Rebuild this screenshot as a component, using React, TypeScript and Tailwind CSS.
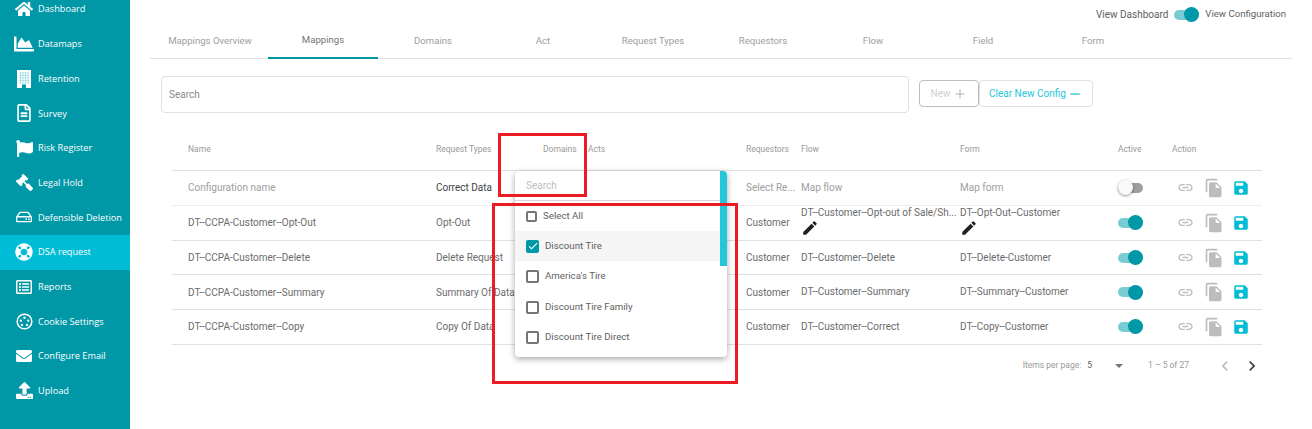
import React from 'react';
import {
  FaHome,
  FaChartArea,
  FaRegFileAlt,
  FaFlag,
  FaGavel,
  FaRegHdd,
  FaLifeRing,
  FaRegListAlt,
  FaEnvelope,
  FaUpload,
} from 'react-icons/fa';
import {
  MdEdit,
  MdLink,
  MdFileCopy,
  MdSave,
  MdChevronLeft,
  MdChevronRight,
  MdCheck,
  MdRemove,
} from 'react-icons/md';
import { Plus } from 'lucide-react';

const CookieIcon = ({ className }: { className?: string }) => (
  <svg viewBox="0 0 20 20" className={className} fill="none">
    <circle cx="10" cy="10" r="8.6" stroke="currentColor" strokeWidth="1.8" />
    <circle cx="10" cy="5.6" r="1.4" fill="currentColor" />
    <circle cx="5.6" cy="9" r="1.4" fill="currentColor" />
    <circle cx="14.4" cy="9" r="1.4" fill="currentColor" />
    <circle cx="7" cy="14" r="1.4" fill="currentColor" />
    <circle cx="13" cy="14" r="1.4" fill="currentColor" />
  </svg>
);

// white block with a faint window grid and a door
const RetentionIcon = ({ className }: { className?: string }) => (
  <svg viewBox="0 0 14 18" className={className}>
    <rect x="0" y="0" width="14" height="18" fill="#fff" />
    <g stroke="#8fd3da" strokeWidth="0.6">
      <path d="M2 3h10M2 5.5h10M2 8h10M2 10.5h10M2 13h10" />
      <path d="M3.5 2v11M6 2v11M8.5 2v11M11 2v11" />
    </g>
    <rect x="5" y="14.5" width="4" height="3.5" fill="#0097a7" />
  </svg>
);

const navItems = [
  { label: 'Dashboard', icon: <FaHome className="w-[18px] h-[18px]" /> },
  { label: 'Datamaps', icon: <FaChartArea className="w-[20px] h-[20px]" /> },
  { label: 'Retention', icon: <RetentionIcon className="w-[14px] h-[18px]" /> },
  { label: 'Survey', icon: <FaRegFileAlt className="w-[16px] h-[18px]" /> },
  { label: 'Risk Register', icon: <FaFlag className="w-[17px] h-[17px]" /> },
  { label: 'Legal Hold', icon: <FaGavel className="w-[17px] h-[17px] -scale-x-100" /> },
  { label: 'Defensible Deletion', icon: <FaRegHdd className="w-[16px] h-[16px]" /> },
  { label: 'DSA request', icon: <FaLifeRing className="w-[18px] h-[18px]" />, active: true },
  { label: 'Reports', icon: <FaRegListAlt className="w-[18px] h-[16px]" /> },
  { label: 'Cookie Settings', icon: <CookieIcon className="w-[17px] h-[17px]" /> },
  { label: 'Configure Email', icon: <FaEnvelope className="w-[18px] h-[16px]" /> },
  { label: 'Upload', icon: <FaUpload className="w-[17px] h-[17px]" /> },
];

const tabs = ['Mappings Overview', 'Mappings', 'Domains', 'Act', 'Request Types', 'Requestors', 'Flow', 'Field', 'Form'];

const tableCols = 'grid grid-cols-[264px_107px_45px_158px_55px_159px_158px_54px_90px]';

const rows = [
  { name: 'DT--CCPA-Customer--Opt-Out', type: 'Opt-Out', flow: 'DT--Customer--Opt-out of Sale/Sh...', form: 'DT--Opt-Out--Customer', edit: true },
  { name: 'DT--CCPA-Customer--Delete', type: 'Delete Request', flow: 'DT--Customer--Delete', form: 'DT--Delete-Customer' },
  { name: 'DT--CCPA-Customer--Summary', type: 'Summary Of Data', flow: 'DT--Customer--Summary', form: 'DT--Summary--Customer' },
  { name: 'DT--CCPA-Customer--Copy', type: 'Copy Of Data', flow: 'DT--Customer--Correct', form: 'DT--Copy--Customer' },
];

const domainOptions = ['Discount Tire', "America's Tire", 'Discount Tire Family', 'Discount Tire Direct'];

const Toggle = ({ on }: { on: boolean }) => (
  <div className="relative w-[25px] h-[15px] flex items-center">
    <div className={`w-full h-[10px] rounded-full ${on ? 'bg-[#7accd4]' : 'bg-[#9e9e9e]'}`}></div>
    <div
      className={`absolute top-0 w-[15px] h-[15px] rounded-full ${
        on ? 'right-0 bg-[#0097a7]' : 'left-0 bg-[#fafafa] shadow-[0_1px_3px_rgba(0,0,0,0.4)]'
      }`}
    ></div>
  </div>
);

const Actions = () => (
  <div className="flex items-center">
    <MdLink className="w-[17px] h-[17px] text-[#bdbdbd] ml-[5px]" />
    <MdFileCopy className="w-[20px] h-[20px] text-[#bdbdbd] ml-[10px]" />
    <MdSave className="w-[18px] h-[18px] text-[#00bcd4] ml-[8px]" />
  </div>
);

const App = () => {
  return (
    <div className="relative flex w-[1312px] h-[429px] overflow-hidden bg-white font-['Roboto',sans-serif] text-[10px] text-[#6b6b6b]">
      {/* Sidebar */}
      <aside className="w-[130px] shrink-0 bg-[#0097a7] text-white font-['Open_Sans',sans-serif]">
        <div className="-mt-[8px]">
          {navItems.map((item) => (
            <div
              key={item.label}
              className={`flex items-center h-[34.7px] pl-[12px] ${item.active ? 'bg-[#00bcd4]' : ''}`}
            >
              <span className="w-[26px] flex justify-center -ml-[1px] mr-[1px]">{item.icon}</span>
              <span className="text-[9.2px] whitespace-nowrap">{item.label}</span>
            </div>
          ))}
        </div>
      </aside>

      {/* Main */}
      <main className="flex-1 min-w-0">
        <div className="flex justify-end items-center h-[15px] mt-[7px] pr-[26px] text-[10px] text-[#616161]">
          <span>View Dashboard</span>
          <div className="ml-[6px] mr-[6px]">
            <Toggle on />
          </div>
          <span className="text-[9.6px]">View Configuration</span>
        </div>

        <div className="flex ml-[20px] mr-[20px] mt-[8px] h-[29px] pl-[8px] border-b border-[#e0e0e0]">
          {tabs.map((tab) => (
            <div
              key={tab}
              className={`w-[110px] flex items-center justify-center pb-[6px] text-[9.6px] text-[#9e9e9e] ${
                tab === 'Mappings' ? 'border-b-2 border-[#0097a7] h-[29px] text-[#757575]' : ''
              } ${tab === 'Mappings Overview' ? 'pr-[6px]' : ''}`}
            >
              {tab}
            </div>
          ))}
        </div>

        <div className="flex items-center mt-[17px] ml-[31px]">
          <div className="w-[748px] h-[37px] flex items-center px-[7px] border border-[#e0e0e0] rounded text-[#8a8a8a]">
            Search
          </div>
          <div className="w-[60px] h-[27px] ml-[10px] mb-[2px] flex items-center justify-center gap-[3px] border border-[#bdbdbd] rounded text-[#d0d0d0]">
            New
            <Plus className="w-[14px] h-[14px] text-[#9e9e9e]" strokeWidth={1.3} />
          </div>
          <div className="w-[114px] h-[27px] mb-[2px] flex items-center justify-center border border-[#e0e0e0] rounded text-[#26c6da]">
            Clear New Config
            <MdRemove className="w-[16px] h-[16px] ml-[1px]" />
          </div>
        </div>

        {/* Table */}
        <div className="ml-[42px] w-[1090px] mt-[14px]">
          <div className={`${tableCols} h-[44px] items-center pt-[2px] text-[8.5px] text-[#9a9a9a] border-b border-[#e0e0e0]`}>
            <div className="pl-[16px]">Name</div>
            <div>Request Types</div>
            <div>Domains</div>
            <div>Acts</div>
            <div>Requestors</div>
            <div>Flow</div>
            <div>Form</div>
            <div>Active</div>
            <div>Action</div>
          </div>

          <div className={`${tableCols} h-[35px] items-center pb-[1px] text-[#9e9e9e] border-b border-[#eeeeee]`}>
            <div className="pl-[16px]">Configuration name</div>
            <div className="text-[#424242]">Correct Data</div>
            <div></div>
            <div></div>
            <div className="whitespace-nowrap">Select Re...</div>
            <div>Map flow</div>
            <div>Map form</div>
            <Toggle on={false} />
            <Actions />
          </div>

          {rows.map((row) => (
            <div key={row.name} className={`${tableCols} h-[34.7px] items-center border-b border-[#e0e0e0]`}>
              <div className="pl-[16px]">{row.name}</div>
              <div className="whitespace-nowrap">{row.type}</div>
              <div></div>
              <div></div>
              <div>Customer</div>
              <div className={`whitespace-nowrap leading-[12px] ${row.edit ? 'mb-[2px]' : ''}`}>
                {row.flow}
                {row.edit && <MdEdit className="w-[18px] h-[18px] text-[#212121] block" />}
              </div>
              <div className={`whitespace-nowrap leading-[12px] ${row.edit ? 'mb-[2px]' : ''}`}>
                {row.form}
                {row.edit && <MdEdit className="w-[18px] h-[18px] text-[#212121] block" />}
              </div>
              <Toggle on />
              <Actions />
            </div>
          ))}

          <div className="flex justify-end items-center h-[42px] text-[8.5px] text-[#9a9a9a]">
            <span>Items per page:</span>
            <span className="ml-[6px] text-[#616161]">5</span>
            <div className="ml-[23px] w-0 h-0 border-x-[4px] border-x-transparent border-t-[4px] border-t-[#757575]"></div>
            <span className="ml-[25px]">1 – 5 of 27</span>
            <MdChevronLeft className="ml-[26px] w-[20px] h-[20px] text-[#bdbdbd]" />
            <MdChevronRight className="ml-[7px] w-[20px] h-[20px] text-[#424242]" />
          </div>
        </div>
      </main>

      {/* Domains dropdown */}
      <div className="absolute left-[515px] top-[171px] w-[212px] h-[186px] bg-white rounded-sm shadow-[0_2px_6px_rgba(0,0,0,0.35)] overflow-hidden text-[9.7px] text-[#616161]">
        <div className="h-[30px] mx-0 flex items-center pl-[11px] border-b border-[#d8d8d8] text-[10px] text-[#bdbdbd]">
          Search
        </div>
        <div className="flex items-center h-[30px] pl-[11px] gap-[6px]">
          <div className="w-[11px] h-[11px] border-2 border-[#757575] rounded-[2px]"></div>
          Select All
        </div>
        <div className="flex items-center h-[30px] pl-[11px] gap-[6px] bg-[#f5f5f5]">
          <div className="w-[13px] h-[13px] flex items-center justify-center bg-[#0097a7] rounded-[2px]">
            <MdCheck className="w-[12px] h-[12px] text-white" />
          </div>
          {domainOptions[0]}
        </div>
        {domainOptions.slice(1).map((opt) => (
          <div key={opt} className="flex items-center h-[30.7px] pl-[11px] gap-[6px]">
            <div className="w-[13px] h-[13px] border-2 border-[#757575] rounded-[2px]"></div>
            {opt}
          </div>
        ))}
        <div className="absolute right-0 top-0 w-[7px] h-[95px] bg-[#26c6da]"></div>
      </div>

      {/* Annotation boxes */}
      <div className="absolute left-[498px] top-[133px] w-[89px] h-[64px] border-[3px] border-[#ed1c24]"></div>
      <div className="absolute left-[492px] top-[203px] w-[246px] h-[181px] border-[3px] border-[#ed1c24]"></div>
    </div>
  );
};

export default App;
